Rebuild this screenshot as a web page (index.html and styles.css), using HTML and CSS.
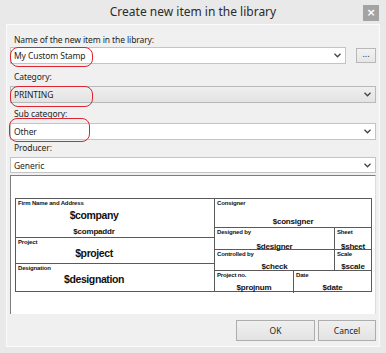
FILE: index.html
```html
<!DOCTYPE html>
<html>
<head>
<meta charset="utf-8">
<link rel="stylesheet" href="styles.css">
</head>
<body>
<div class="window">
  <div class="titlebar">
    <span></span>
    <span class="title">Create new item in the library</span>
    <span class="close">&#215;</span>
  </div>
  <div class="client">
    <div class="label l-name">Name of the new item in the library:</div>
    <div class="name-row">
      <div class="combo white mark-wrap">
        <span class="val">My Custom Stamp</span>
        <svg class="chev" width="7" height="5" viewBox="0 0 7 5"><polyline points="0.5,0.8 3.5,3.8 6.5,0.8" fill="none" stroke="#444" stroke-width="1.3"/></svg>
        <span class="mark m-name"></span>
      </div>
      <div class="dots">...</div>
    </div>
    <div class="label l-cat">Category:</div>
    <div class="combo grey mark-wrap">
      <span class="val">PRINTING</span>
      <svg class="chev" width="7" height="5" viewBox="0 0 7 5"><polyline points="0.5,0.8 3.5,3.8 6.5,0.8" fill="none" stroke="#444" stroke-width="1.3"/></svg>
      <span class="mark m-cat"></span>
    </div>
    <div class="label l-sub">Sub category:</div>
    <div class="combo white mark-wrap">
      <span class="val">Other</span>
      <svg class="chev" width="7" height="5" viewBox="0 0 7 5"><polyline points="0.5,0.8 3.5,3.8 6.5,0.8" fill="none" stroke="#444" stroke-width="1.3"/></svg>
      <span class="mark m-sub"></span>
    </div>
    <div class="label l-prod">Producer:</div>
    <div class="combo white prod">
      <span class="val">Generic</span>
      <svg class="chev" width="7" height="5" viewBox="0 0 7 5"><polyline points="0.5,0.8 3.5,3.8 6.5,0.8" fill="none" stroke="#444" stroke-width="1.3"/></svg>
    </div>
    <div class="preview">
      <div class="stamp">
        <div class="col left">
          <div class="cell firm">
            <div class="cap">Firm Name and Address</div>
            <div class="big">$company</div>
            <div class="small addr">$compaddr</div>
          </div>
          <div class="cell proj">
            <div class="cap">Project</div>
            <div class="big">$project</div>
          </div>
          <div class="cell desig">
            <div class="cap">Designation</div>
            <div class="big">$designation</div>
          </div>
        </div>
        <div class="col right">
          <div class="cell cons">
            <div class="cap">Consigner</div>
            <div class="small">$consigner</div>
          </div>
          <div class="row r-des">
            <div class="cell wide">
              <div class="cap">Designed by</div>
              <div class="small">$designer</div>
            </div>
            <div class="cell narrow">
              <div class="cap">Sheet</div>
              <div class="small">$sheet</div>
            </div>
          </div>
          <div class="row r-chk">
            <div class="cell wide">
              <div class="cap">Controlled by</div>
              <div class="small">$check</div>
            </div>
            <div class="cell narrow">
              <div class="cap">Scale</div>
              <div class="small">$scale</div>
            </div>
          </div>
          <div class="row r-pn">
            <div class="cell pn">
              <div class="cap">Project no.</div>
              <div class="small">$projnum</div>
            </div>
            <div class="cell dt">
              <div class="cap">Date</div>
              <div class="small">$date</div>
            </div>
          </div>
        </div>
      </div>
    </div>
    <div class="buttons">
      <div class="btn ok">OK</div>
      <div class="btn cancel">Cancel</div>
    </div>
  </div>
</div>
</body>
</html>
```

FILE: styles.css
```css
html, body {
  margin: 0;
  padding: 0;
}
body {
  background: #e9e9e9;
  font-family: "Noto Sans", "Open Sans", sans-serif;
  color: #1e1e1e;
}
.window {
  width: 386px;
  height: 353px;
  background: #e9e9e9;
  box-sizing: border-box;
}
.titlebar {
  height: 24px;
  display: grid;
  grid-template-columns: 1fr auto 1fr;
  align-items: center;
}
.title {
  font-size: 12px;
  color: #2b2b2b;
  line-height: 24px;
}
.close {
  justify-self: end;
  margin-right: 7px;
  margin-top: 2px;
  width: 16px;
  height: 16px;
  background: #a3a3a3;
  color: #fff;
  font-family: "DejaVu Sans", sans-serif;
  font-size: 11px;
  font-weight: bold;
  line-height: 16px;
  text-align: center;
}
.client {
  margin: 0 6px;
  height: 323px;
  box-sizing: border-box;
  border: 1px solid #fbfbfb;
  background: #f0f0f0;
  padding: 0 3px 4px 3px;
  display: flex;
  flex-direction: column;
}
.label {
  font-size: 8.5px;
  letter-spacing: -0.1px;
  line-height: 12px;
  height: 12px;
  padding-left: 4px;
  color: #1e1e1e;
}
.l-name { margin-top: 9px; margin-bottom: 1px; }
.l-cat { margin-top: 7px; margin-bottom: 3px; }
.l-sub { margin-top: 5px; margin-bottom: 3px; }
.l-prod { margin-top: 2px; margin-bottom: 3px; }
.name-row {
  display: flex;
  align-items: flex-start;
  gap: 10px;
}
.name-row .combo {
  flex: 1;
}
.combo {
  position: relative;
  height: 17px;
  box-sizing: border-box;
  border: 1px solid #c4c4c4;
  display: flex;
  align-items: center;
  justify-content: space-between;
  padding: 0 4px 0 3px;
  font-size: 8.5px;
  letter-spacing: -0.1px;
}
.combo.white { background: #fff; }
.combo.grey {
  background: linear-gradient(#efefef, #e3e3e3);
  border-color: #b9b9b9;
}
.combo.prod { height: 16px; }
.val { color: #1e1e1e; }
.chev { display: block; }
.dots {
  width: 20px;
  height: 15px;
  margin-top: 1px;
  box-sizing: border-box;
  border: 1px solid #b8b8b8;
  background: linear-gradient(#f2f2f2, #e6e6e6);
  font-size: 9px;
  line-height: 10px;
  text-align: center;
  color: #333;
}
.mark {
  position: absolute;
  border: 1.5px solid #e02330;
  border-radius: 8px;
  box-sizing: border-box;
  pointer-events: none;
}
.m-name { left: -1px; top: -1px; width: 83px; height: 20px; }
.m-cat { left: -1px; top: -1px; width: 83px; height: 21px; }
.m-sub { left: -2px; top: -6px; width: 81px; height: 24px; }
.preview {
  margin-top: 2px;
  height: 139px;
  box-sizing: border-box;
  background: #fff;
  border-top: 1px solid #7d7d7d;
  border-left: 1px solid #7d7d7d;
  border-right: 1px solid #dcdcdc;
  padding: 22px 4px 0 4px;
}
.stamp {
  width: 357px;
  height: 94px;
  box-sizing: border-box;
  border: 1px solid #5a5a5a;
  display: flex;
  font-family: "Liberation Sans", "Arimo", sans-serif;
  font-weight: bold;
  color: #111;
}
.col {
  display: flex;
  flex-direction: column;
}
.col.left {
  width: 198px;
  border-right: 1px solid #5a5a5a;
}
.col.left .cell {
  padding-right: 42px;
}
.col.right {
  flex: 1;
}
.cell {
  box-sizing: border-box;
  display: flex;
  flex-direction: column;
  align-items: center;
}
.cap {
  align-self: flex-start;
  font-size: 6px;
  letter-spacing: -0.15px;
  line-height: 7px;
  padding-left: 2px;
  padding-top: 1px;
}
.big {
  font-size: 10.5px;
  letter-spacing: -0.4px;
  line-height: 13px;
}
.small {
  font-size: 8px;
  letter-spacing: -0.2px;
  line-height: 10px;
}
.firm { height: 39px; border-bottom: 1px solid #5a5a5a; }
.firm .big { margin-top: 2px; }
.firm .addr { margin-top: 5px; }
.proj { height: 26px; border-bottom: 1px solid #5a5a5a; }
.proj .big { margin-top: 1px; }
.desig { flex: 1; }
.desig .big { margin-top: 1px; }
.cons { height: 32px; border-bottom: 1px solid #5a5a5a; }
.cons .small { margin-top: 10px; }
.row {
  display: flex;
  border-bottom: 1px solid #5a5a5a;
}
.r-des { height: 21px; }
.r-chk { height: 20px; }
.r-pn { flex: 1; border-bottom: none; }
.r-des .small { margin-top: 6px; }
.r-chk .small { margin-top: 4px; }
.r-pn .small { margin-top: 4px; }
.wide { width: 120px; border-right: 1px solid #5a5a5a; }
.narrow { flex: 1; }
.pn { width: 79px; border-right: 1px solid #5a5a5a; }
.dt { flex: 1; }
.buttons {
  margin-top: 6px;
  display: flex;
  justify-content: flex-end;
  gap: 3px;
}
.btn {
  height: 21px;
  box-sizing: border-box;
  border: 1px solid #adadad;
  background: linear-gradient(#f0f0f0, #e3e3e3);
  font-size: 8.5px;
  line-height: 19px;
  text-align: center;
  color: #1e1e1e;
}
.ok { width: 79px; }
.cancel { width: 58px; }
```
